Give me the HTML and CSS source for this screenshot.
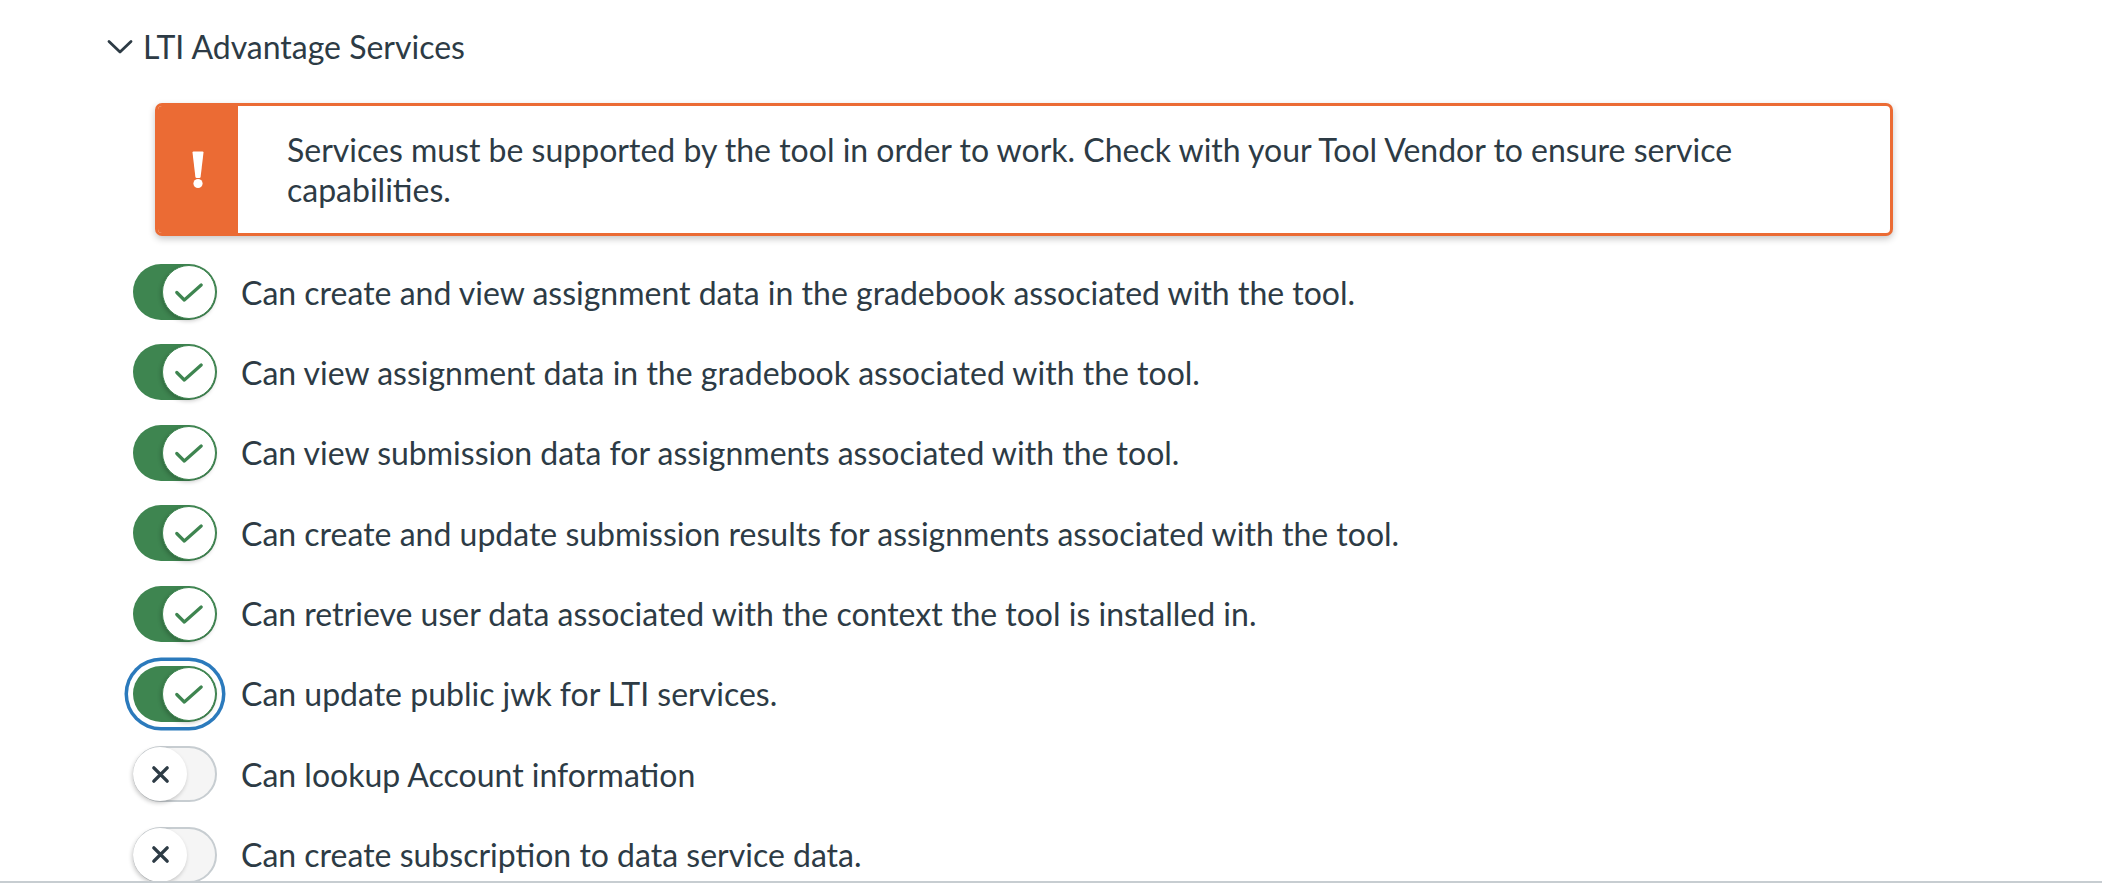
FILE: index.html
```html
<!DOCTYPE html>
<html lang="en">
<head>
<meta charset="utf-8">
<title>LTI Advantage Services</title>
<link rel="stylesheet" href="styles.css">
</head>
<body>
<div class="page">
  <section class="services">
    <div class="disclosure">
      <svg class="chevron" width="26" height="16" viewBox="0 0 26 16" aria-hidden="true"><path d="M2 2.5 L13 13 L24 2.5" fill="none" stroke="#2d3b45" stroke-width="2.8" stroke-linecap="round" stroke-linejoin="round"/></svg>
      <span class="disclosure-title">LTI Advantage Services</span>
    </div>
    <div class="content">
      <div class="alert">
        <div class="alert-icon">
          <svg width="14" height="38" viewBox="0 0 14 38" aria-hidden="true"><path d="M1.5 1.5 Q1.5 0.5 2.5 0.5 H11.5 Q12.5 0.5 12.5 1.5 L9.6 26 Q9.4 27 8.4 27 H5.6 Q4.6 27 4.4 26 Z" fill="#fff"/><circle cx="7" cy="32.5" r="4.6" fill="#fff"/></svg>
        </div>
        <div class="alert-text">Services must be supported by the tool in order to work. Check with your Tool Vendor to ensure service capabilities.</div>
      </div>
      <ul class="toggles">
        <li class="toggle-row"><span class="track on"><span class="knob"><svg class="check" viewBox="0 0 32 20" width="32" height="20"><path d="M3 10 L11 18 L29 2" fill="none" stroke="#3e8550" stroke-width="3.4" stroke-linecap="round" stroke-linejoin="round"/></svg></span></span><span class="label">Can create and view assignment data in the gradebook associated with the tool.</span></li>
        <li class="toggle-row"><span class="track on"><span class="knob"><svg class="check" viewBox="0 0 32 20" width="32" height="20"><path d="M3 10 L11 18 L29 2" fill="none" stroke="#3e8550" stroke-width="3.4" stroke-linecap="round" stroke-linejoin="round"/></svg></span></span><span class="label">Can view assignment data in the gradebook associated with the tool.</span></li>
        <li class="toggle-row"><span class="track on"><span class="knob"><svg class="check" viewBox="0 0 32 20" width="32" height="20"><path d="M3 10 L11 18 L29 2" fill="none" stroke="#3e8550" stroke-width="3.4" stroke-linecap="round" stroke-linejoin="round"/></svg></span></span><span class="label">Can view submission data for assignments associated with the tool.</span></li>
        <li class="toggle-row"><span class="track on"><span class="knob"><svg class="check" viewBox="0 0 32 20" width="32" height="20"><path d="M3 10 L11 18 L29 2" fill="none" stroke="#3e8550" stroke-width="3.4" stroke-linecap="round" stroke-linejoin="round"/></svg></span></span><span class="label">Can create and update submission results for assignments associated with the tool.</span></li>
        <li class="toggle-row"><span class="track on"><span class="knob"><svg class="check" viewBox="0 0 32 20" width="32" height="20"><path d="M3 10 L11 18 L29 2" fill="none" stroke="#3e8550" stroke-width="3.4" stroke-linecap="round" stroke-linejoin="round"/></svg></span></span><span class="label">Can retrieve user data associated with the context the tool is installed in.</span></li>
        <li class="toggle-row"><span class="track on focused"><span class="knob"><svg class="check" viewBox="0 0 32 20" width="32" height="20"><path d="M3 10 L11 18 L29 2" fill="none" stroke="#3e8550" stroke-width="3.4" stroke-linecap="round" stroke-linejoin="round"/></svg></span></span><span class="label">Can update public jwk for LTI services.</span></li>
        <li class="toggle-row"><span class="track off"><span class="knob"><svg class="cross" viewBox="0 0 20 20" width="20" height="20"><path d="M3 3 L17 17 M17 3 L3 17" fill="none" stroke="#2d3b45" stroke-width="3.6" stroke-linecap="round"/></svg></span></span><span class="label">Can lookup Account information</span></li>
        <li class="toggle-row"><span class="track off"><span class="knob"><svg class="cross" viewBox="0 0 20 20" width="20" height="20"><path d="M3 3 L17 17 M17 3 L3 17" fill="none" stroke="#2d3b45" stroke-width="3.6" stroke-linecap="round"/></svg></span></span><span class="label">Can create subscription to data service data.</span></li>
      </ul>
    </div>
  </section>
</div>
<div class="bottom-rule"></div>
</body>
</html>
```

FILE: styles.css
```css
* { box-sizing: border-box; }

html, body {
  margin: 0;
  padding: 0;
  background: #ffffff;
  height: 100%;
  overflow: hidden;
}

body {
  font-family: Lato, "Noto Sans", "Liberation Sans", sans-serif;
  color: #2d3b45;
}

.page {
  padding: 23px 0 0 107px;
}

.disclosure {
  display: flex;
  align-items: center;
  height: 48px;
  gap: 10px;
}

.chevron {
  display: block;
  margin-top: -1px;
}

.disclosure-title {
  font-size: 32px;
  line-height: 48px;
}

.content {
  padding-top: 32px;
}

.alert {
  display: flex;
  margin-left: 48px;
  width: 1738px;
  border: 3px solid #eb6b34;
  border-radius: 7px;
  background: #ffffff;
  box-shadow: 0 3px 7px rgba(0, 0, 0, 0.22);
  overflow: hidden;
}

.alert-icon {
  flex: 0 0 80px;
  background: #eb6b34;
  display: flex;
  align-items: center;
  justify-content: center;
}

.alert-icon svg {
  display: block;
}

.alert-text {
  flex: 1;
  padding: 23.5px 90px 23.5px 49px;
  font-size: 32px;
  line-height: 40px;
}

.toggles {
  list-style: none;
  margin: 28px 0 0 26px;
  padding: 0;
  display: flex;
  flex-direction: column;
  gap: 24.4px;
}

.toggle-row {
  display: flex;
  align-items: center;
  gap: 24px;
  height: 56px;
}

.label {
  font-size: 32px;
  line-height: 47px;
  white-space: nowrap;
}

.track {
  flex: 0 0 84px;
  width: 84px;
  height: 56px;
  border-radius: 28px;
  display: flex;
  align-items: center;
  padding: 1px;
}

.track.on {
  background: #3e8550;
  justify-content: flex-end;
}

.track.off {
  background: #f5f5f5;
  border: 2px solid #c7cdd1;
  justify-content: flex-start;
  padding: 0;
}

.track.focused {
  box-shadow: 0 0 0 5px #ffffff, 0 0 0 8.5px #2b7abc;
}

.knob {
  width: 54px;
  height: 54px;
  border-radius: 50%;
  background: #ffffff;
  display: flex;
  align-items: center;
  justify-content: center;
  box-shadow: -1px 2px 4px rgba(0, 0, 0, 0.22);
}

.track.on .knob {
  border: 1.5px solid #3e8550;
}

.track.off .knob {
  margin-left: -2px;
  width: 54px;
  height: 54px;
}

.check {
  display: block;
  width: 30px;
  height: 19px;
  margin: 1px 0 0 -1px;
}

.cross {
  display: block;
  width: 19px;
  height: 19px;
}

.bottom-rule {
  position: fixed;
  left: 0;
  right: 0;
  bottom: 0;
  height: 2px;
  background: #c7cdd1;
}
```
